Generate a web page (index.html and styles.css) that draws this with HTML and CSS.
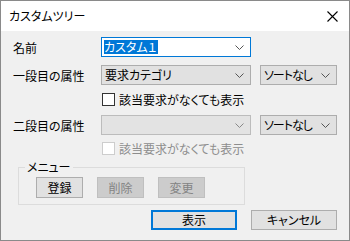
FILE: index.html
```html
<!DOCTYPE html>
<html lang="ja">
<head>
  <meta charset="UTF-8" />
  <title>カスタムツリー</title>
  <link rel="stylesheet" href="styles.css">
</head>
<body>
  <div class="dialog">
    <div class="titlebar">
      <span class="title">カスタムツリー</span>
      <svg class="close" width="11" height="11" viewBox="0 0 11 11"><path d="M0.5 0.5 L10.5 10.5 M10.5 0.5 L0.5 10.5" stroke="#000" stroke-width="1.1" fill="none"/></svg>
    </div>

    <div class="body">
      <div class="row r-name">
        <span class="label">名前</span>
        <div class="combo editable">
          <span class="sel">カスタム１</span>
          <svg class="chev" width="9" height="5" viewBox="0 0 9 5"><path d="M0.5 0.5 L4.5 4.5 L8.5 0.5" stroke="#555" fill="none"/></svg>
        </div>
      </div>

      <div class="row r-first">
        <span class="label">一段目の属性</span>
        <div class="combo">
          <span class="val">要求カテゴリ</span>
          <svg class="chev" width="9" height="5" viewBox="0 0 9 5"><path d="M0.5 0.5 L4.5 4.5 L8.5 0.5" stroke="#555" fill="none"/></svg>
        </div>
        <div class="combo sort">
          <span class="val">ソートなし</span>
          <svg class="chev" width="9" height="5" viewBox="0 0 9 5"><path d="M0.5 0.5 L4.5 4.5 L8.5 0.5" stroke="#555" fill="none"/></svg>
        </div>
      </div>

      <div class="check r-check1">
        <span class="box"></span>
        <span>該当要求がなくても表示</span>
      </div>

      <div class="row r-second">
        <span class="label">二段目の属性</span>
        <div class="combo disabled">
          <span class="val"></span>
          <svg class="chev" width="9" height="5" viewBox="0 0 9 5"><path d="M0.5 0.5 L4.5 4.5 L8.5 0.5" stroke="#888" fill="none"/></svg>
        </div>
        <div class="combo sort">
          <span class="val">ソートなし</span>
          <svg class="chev" width="9" height="5" viewBox="0 0 9 5"><path d="M0.5 0.5 L4.5 4.5 L8.5 0.5" stroke="#555" fill="none"/></svg>
        </div>
      </div>

      <div class="check disabled r-check2">
        <span class="box"></span>
        <span>該当要求がなくても表示</span>
      </div>

      <fieldset class="menu">
        <legend>メニュー</legend>
        <button class="btn">登録</button>
        <button class="btn" disabled>削除</button>
        <button class="btn" disabled>変更</button>
      </fieldset>

      <div class="actions">
        <button class="btn wide default">表示</button>
        <button class="btn wide">キャンセル</button>
      </div>
    </div>
  </div>
</body>
</html>
```

FILE: styles.css
```css
/* Base */
*, *::before, *::after { box-sizing: border-box; }
html, body { margin: 0; padding: 0; background: #fff; }
body { font-family: "Noto Sans CJK JP", "Noto Sans", sans-serif; font-size: 12px; color: #000; font-feature-settings: "palt"; }

/* Window frame */
.dialog { width: 350px; height: 241px; border: 1px solid #8a8a8a; display: flex; flex-direction: column; }
.titlebar { height: 30px; background: #fff; display: flex; align-items: center; justify-content: space-between; padding: 0 11px 0 8px; flex-shrink: 0; }
.titlebar .title { font-size: 12px; line-height: 1; }
.body { flex: 1; background: #f0f0f0; padding: 6px 0 0 12px; display: flex; flex-direction: column; }

/* Label + combo rows */
.row { display: flex; align-items: center; height: 20px; }
.row .label { width: 88px; }
.r-first { margin-top: 8px; }
.r-second { margin-top: 8px; }

.combo { width: 150px; height: 20px; border: 1px solid #adadad; background: #e1e1e1; display: flex; align-items: center; justify-content: space-between; padding: 0 6px 0 3px; white-space: nowrap; }
.combo .val { line-height: 1; }
.combo.editable { background: #fff; border-color: #0078d7; padding-left: 2px; }
.combo.editable .sel { background: #0078d7; color: #fff; line-height: 14px; padding-right: 1px; }
.combo.disabled { background: #e3e3e3; border-color: #bcbcbc; }
.combo.sort { width: 77px; margin-left: 9px; padding-right: 6px; }
.combo.sort .val { letter-spacing: -1px; }

/* Checkboxes */
.check { display: flex; align-items: center; gap: 4px; margin-left: 89px; height: 15px; }
.check .box { width: 13px; height: 13px; border: 1px solid #333; background: #fff; }
.check.disabled { color: #8d8d8d; }
.check.disabled .box { border-color: #cdcdcd; }
.r-check1 { margin-top: 7px; }
.r-check2 { margin-top: 6px; }

/* Menu group */
.menu { margin: 4px 0 0 5px; width: 227px; height: 45px; border: 1px solid #dcdcdc; padding: 3px 0 0 17px; display: flex; gap: 14px; }
.menu legend { padding: 0 2px; margin-left: -11px; line-height: 14px; }

/* Buttons */
.btn { font: inherit; width: 47px; height: 21px; border: 1px solid #adadad; background: #e1e1e1; color: #000; padding: 0; line-height: 1; }
.btn:disabled { background: #cccccc; border-color: #bfbfbf; color: #838383; }
.actions { display: flex; justify-content: flex-end; gap: 14px; padding-right: 12px; margin-top: 5px; }
.btn.wide { width: 86px; height: 20px; }
.btn.default { border: 2px solid #0078d7; }
```
